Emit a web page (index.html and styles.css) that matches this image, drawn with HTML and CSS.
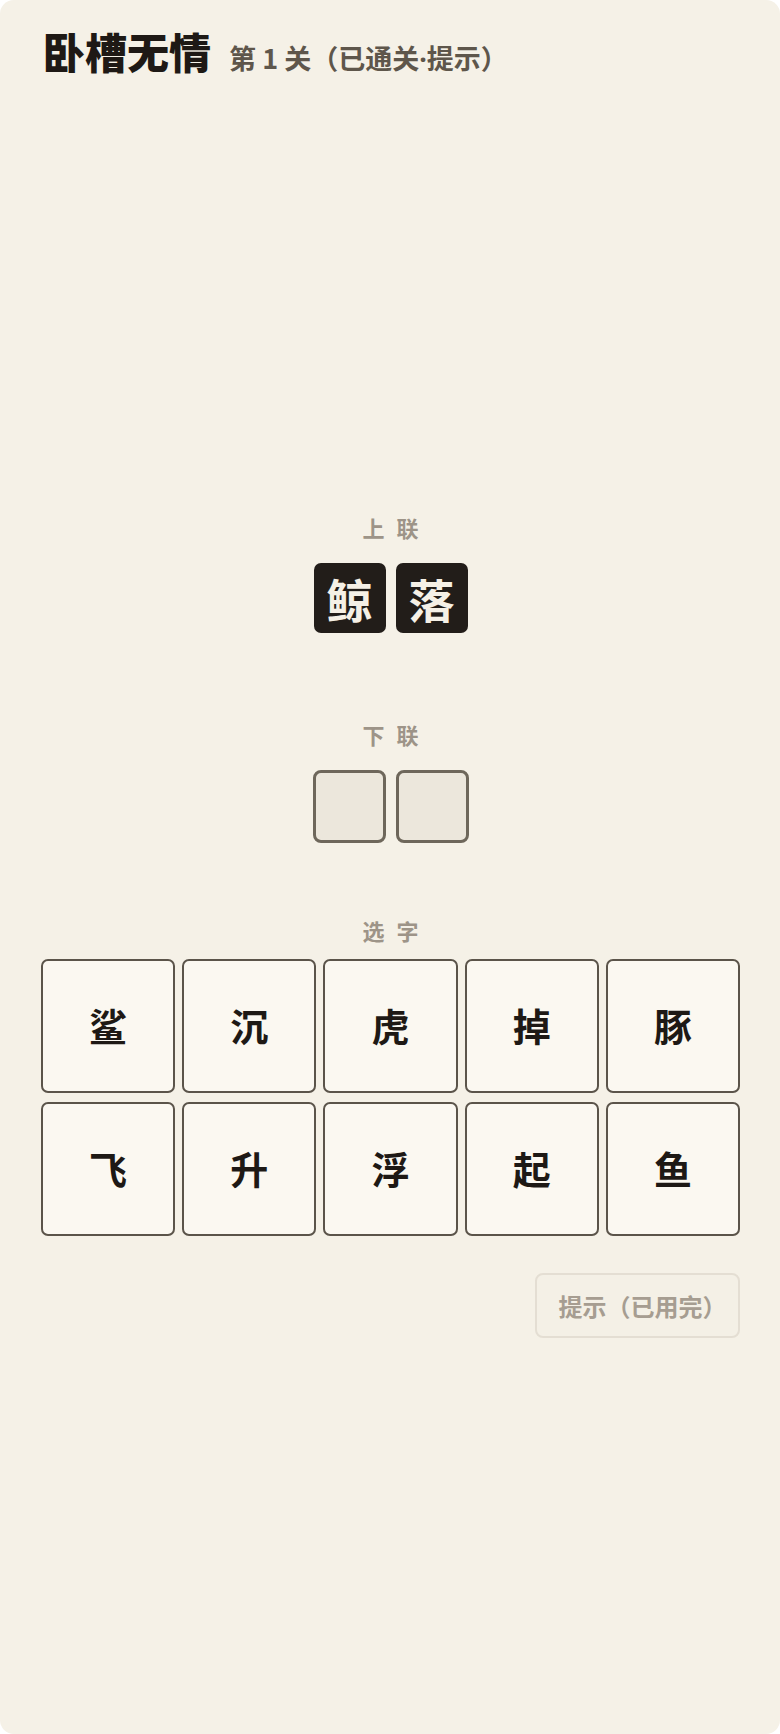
FILE: index.html
```html
<!DOCTYPE html>
<html lang="zh-CN">
<head>
<meta charset="utf-8">
<title>卧槽无情</title>
<link rel="stylesheet" href="styles.css">
</head>
<body>
<div class="app">
  <header class="head">
    <h1 class="title">卧槽无情</h1>
    <span class="sub">第 1 关（已通关<span class="dot">·</span>提示）</span>
  </header>
  <main class="board">
    <section class="line upper">
      <div class="label">上联</div>
      <div class="tiles">
        <div class="tile solid">鲸</div>
        <div class="tile solid">落</div>
      </div>
    </section>
    <section class="line lower">
      <div class="label">下联</div>
      <div class="tiles">
        <div class="tile empty"></div>
        <div class="tile empty"></div>
      </div>
    </section>
    <section class="pick">
      <div class="label">选字</div>
      <div class="grid">
        <button class="cell">鲨</button>
        <button class="cell">沉</button>
        <button class="cell">虎</button>
        <button class="cell">掉</button>
        <button class="cell">豚</button>
        <button class="cell">飞</button>
        <button class="cell">升</button>
        <button class="cell">浮</button>
        <button class="cell">起</button>
        <button class="cell">鱼</button>
      </div>
      <div class="actions">
        <button class="hint" disabled>提示（已用完）</button>
      </div>
    </section>
  </main>
</div>
</body>
</html>
```

FILE: styles.css
```css
* { box-sizing: border-box; }
html, body {
  margin: 0;
  padding: 0;
  background: #ffffff;
}
body {
  font-family: "Noto Sans CJK SC", "Noto Sans", sans-serif;
}
.app {
  width: 780px;
  height: 1734px;
  background: #f5f1e7;
  border-radius: 14px;
  padding: 30px 40px 0 41px;
  overflow: hidden;
}
.head {
  display: flex;
  align-items: baseline;
  gap: 18px;
  padding-left: 2px;
}
.title {
  margin: 0;
  font-size: 42px;
  line-height: 1;
  font-weight: 900;
  color: #1e1915;
}
.sub {
  font-size: 27px;
  line-height: 1;
  font-weight: 700;
  color: #5e564b;
}
.dot {
  font-family: "Noto Sans", "DejaVu Sans", sans-serif;
  font-weight: 700;
}
.board {
  margin-top: 444px;
  display: flex;
  flex-direction: column;
}
.label {
  font-size: 22px;
  line-height: 22px;
  font-weight: 700;
  color: #9d9488;
  letter-spacing: 12px;
  padding-left: 12px;
  text-align: center;
}
.line {
  display: flex;
  flex-direction: column;
  align-items: center;
  gap: 25px;
}
.lower {
  margin-top: 90px;
}
.tiles {
  display: flex;
  gap: 10px;
}
.tile {
  width: 72px;
  height: 72px;
  border-radius: 7px;
  display: flex;
  align-items: center;
  justify-content: center;
}
.solid {
  height: 70px;
  background: #221d19;
  color: #f5f0e6;
  font-size: 46px;
  font-weight: 700;
  line-height: 1;
}
.empty {
  height: 73px;
  width: 73px;
  background: #ece7dc;
  border: 3px solid #6e675b;
  border-radius: 8px;
}
.pick {
  margin-top: 76px;
  display: flex;
  flex-direction: column;
}
.grid {
  margin-top: 18px;
  display: grid;
  grid-template-columns: repeat(5, 1fr);
  gap: 9px 7px;
}
.cell {
  aspect-ratio: 1 / 1;
  background: #fbf8f1;
  border: 2px solid #5b544a;
  border-radius: 7px;
  font-family: "Noto Sans CJK SC", "Noto Sans", sans-serif;
  font-size: 38px;
  font-weight: 700;
  color: #1e1915;
  padding: 0 0 4px;
  display: flex;
  align-items: center;
  justify-content: center;
}
.actions {
  margin-top: 37px;
  display: flex;
  justify-content: flex-end;
}
.hint {
  width: 205px;
  height: 65px;
  background: #f4f0e6;
  border: 2px solid #e4ded3;
  border-radius: 8px;
  font-family: "Noto Sans CJK SC", "Noto Sans", sans-serif;
  font-size: 24px;
  font-weight: 700;
  color: #a69d91;
  padding: 0 10px 0 20px;
}
```
